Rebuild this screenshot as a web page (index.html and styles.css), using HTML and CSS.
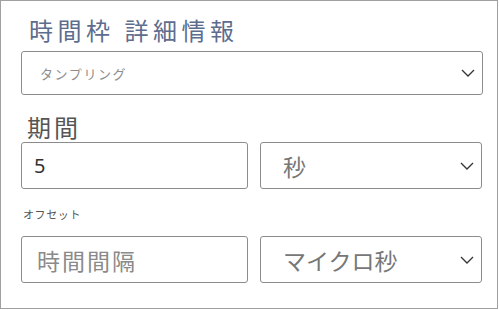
FILE: index.html
```html
<!DOCTYPE html>
<html lang="ja">
<head>
    <meta charset="UTF-8">
    <meta name="viewport" content="width=device-width, initial-scale=1.0">
    <title>時間枠 詳細情報</title>
    <link rel="stylesheet" href="styles.css">
</head>
<body>
    <div class="panel">
        <div class="title">時間枠 詳細情報</div>
        <div class="select wide">
            <span class="placeholder-small">タンプリング</span>
            <svg class="chevron" width="14" height="8" viewBox="0 0 14 8"><polyline points="1,1 7,7 13,1" fill="none" stroke="#333" stroke-width="1.3"/></svg>
        </div>

        <div class="label-big">期間</div>
        <div class="row">
            <div class="input"><span class="value">5</span></div>
            <div class="select">
                <span class="option">秒</span>
                <svg class="chevron" width="14" height="8" viewBox="0 0 14 8"><polyline points="1,1 7,7 13,1" fill="none" stroke="#333" stroke-width="1.3"/></svg>
            </div>
        </div>

        <div class="label-small">オフセット</div>
        <div class="row">
            <div class="input"><span class="placeholder">時間間隔</span></div>
            <div class="select">
                <span class="option">マイクロ秒</span>
                <svg class="chevron" width="14" height="8" viewBox="0 0 14 8"><polyline points="1,1 7,7 13,1" fill="none" stroke="#333" stroke-width="1.3"/></svg>
            </div>
        </div>
    </div>
</body>
</html>
```

FILE: styles.css
```css
body {
    margin: 0;
    background-color: #fff;
    font-family: "Noto Sans CJK JP", "Noto Sans", sans-serif;
}
.panel {
    box-sizing: border-box;
    width: 498px;
    height: 309px;
    border: 1px solid #a0a0a0;
    padding: 14px 0 0 20px;
}
.title {
    height: 32px;
    line-height: 30px;
    font-size: 24px;
    letter-spacing: 4.5px;
    color: #5d6d8e;
    margin-left: 8px;
}
.select,
.input {
    box-sizing: border-box;
    display: flex;
    align-items: center;
    border: 1px solid #8c8c8c;
    border-radius: 3px;
    background: #fff;
}
.select {
    width: 222px;
    height: 47px;
    padding: 0 7px 0 22px;
    justify-content: space-between;
}
.select.wide {
    width: 462px;
    height: 44px;
    margin-top: 4px;
    padding-left: 18px;
}
.input {
    width: 227px;
    height: 47px;
    padding-left: 12px;
}
.placeholder-small {
    font-size: 13px;
    letter-spacing: 1.6px;
    color: #8e8e8e;
}
.label-big {
    height: 30px;
    line-height: 30px;
    margin-top: 17px;
    margin-left: 6px;
    font-size: 24px;
    letter-spacing: 3px;
    color: #555;
}
.row {
    display: flex;
    gap: 12px;
}
.value {
    font-family: "Noto Sans", sans-serif;
    font-size: 20px;
    color: #333;
}
.placeholder {
    font-size: 23px;
    letter-spacing: 2px;
    color: #8a8a8a;
    margin-left: 3px;
}
.option {
    font-size: 23px;
    color: #777;
}
.label-small {
    padding-top: 18px;
    height: 14px;
    line-height: 14px;
    margin-bottom: 15px;
    margin-left: 2px;
    font-size: 11px;
    letter-spacing: 0.6px;
    color: #555;
}
```
